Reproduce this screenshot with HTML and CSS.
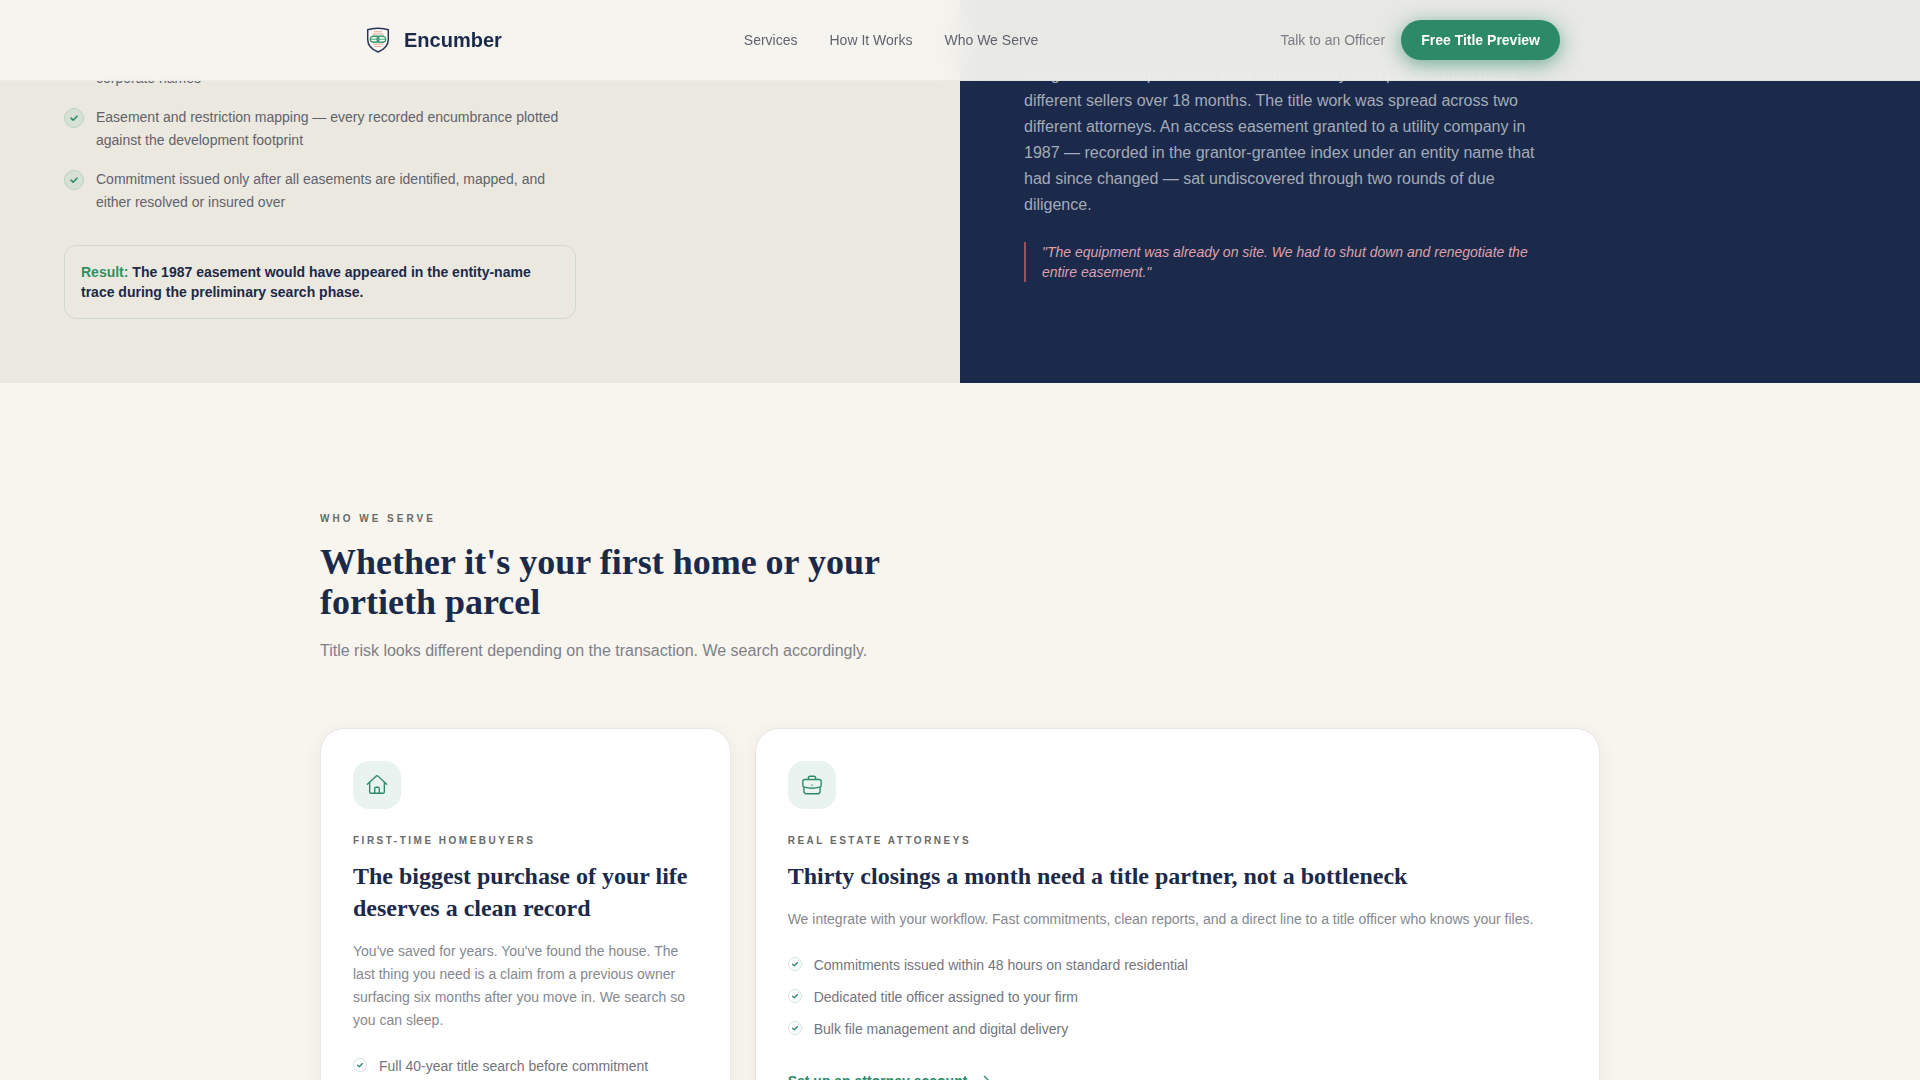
FILE: index.html
```html
<!DOCTYPE html>
<html lang="en">
<head>
<meta charset="utf-8">
<meta name="viewport" content="width=device-width, initial-scale=1">
<title>Encumber</title>
<link rel="stylesheet" href="styles.css">
</head>
<body>
<svg class="sprite" aria-hidden="true">
  <symbol id="check" viewBox="0 0 10 10"><path d="M2 5.2 4.2 7.2 8 3.2" fill="none" stroke="currentColor" stroke-width="1.6" stroke-linecap="round" stroke-linejoin="round"/></symbol>
</svg>

<header class="topbar">
  <div class="topbar-inner">
    <a class="brand" href="#">
      <svg class="brand-mark" viewBox="0 0 36 36" aria-hidden="true">
        <path d="M18 6.200c4.200 0 7.600.5 10.300 1.600v9.700c0 6-4.200 10-10.300 12.500-6.100-2.500-10.300-6.500-10.300-12.500v-9.700c2.700-1.100 6.100-1.600 10.300-1.600z" fill="#fbfaf7" stroke="#2a3655" stroke-width="1.500"/>
        <path d="M14 9.800h8M12.500 12h11M13 22.200h10M14.500 24.500h7" stroke="#e0a98c" stroke-width="1"/>
        <path d="M12 20.300h12M12 14h12M10.500 17.200h15" stroke="#7fc29f" stroke-width="1.400"/>
        <rect x="10.300" y="14.300" width="8.700" height="5.800" rx="2.900" fill="none" stroke="#3f9a75" stroke-width="1.300"/>
        <rect x="17" y="14.300" width="8.700" height="5.800" rx="2.900" fill="none" stroke="#3f9a75" stroke-width="1.300"/>
      </svg>
      <span>Encumber</span>
    </a>
    <nav class="nav">
      <a href="#services">Services</a>
      <a href="#how">How It Works</a>
      <a href="#serve">Who We Serve</a>
    </nav>
    <div class="actions">
      <a class="talk" href="#contact">Talk to an Officer</a>
      <button class="cta" type="button">Free Title Preview</button>
    </div>
  </div>
</header>

<main>
  <section class="split">
    <div class="panel panel-light">
      <ul class="steps">
        <li class="step step-tail"><span>corporate names</span></li>
        <li class="step"><span class="dot"><svg><use href="#check"/></svg></span><span>Easement and restriction mapping — every recorded encumbrance plotted against the development footprint</span></li>
        <li class="step"><span class="dot"><svg><use href="#check"/></svg></span><span>Commitment issued only after all easements are identified, mapped, and either resolved or insured over</span></li>
      </ul>
      <p class="result"><span class="result-label">Result:</span> The 1987 easement would have appeared in the entity-name trace during the preliminary search phase.</p>
    </div>
    <div class="panel panel-dark">
      <p class="story">A logistics developer assembled some county land parcels from three different sellers over 18 months. The title work was spread across two different attorneys. An access easement granted to a utility company in 1987 — recorded in the grantor-grantee index under an entity name that had since changed — sat undiscovered through two rounds of due diligence.</p>
      <blockquote class="quote">"The equipment was already on site. We had to shut down and renegotiate the entire easement."</blockquote>
    </div>
  </section>

  <section class="serve" id="serve">
    <div class="intro">
      <p class="eyebrow eyebrow-wide">WHO WE SERVE</p>
      <h2>Whether it's your first home or your fortieth parcel</h2>
      <p class="lede">Title risk looks different depending on the transaction. We search accordingly.</p>
    </div>
    <div class="cards">
      <article class="card">
        <div class="tile">
          <svg viewBox="0 0 24 24" aria-hidden="true"><path d="M1.500 11.200 10.600 2.600a2 2 0 0 1 2.800 0l9.100 8.600M4 9v10.500a1.500 1.500 0 0 0 1.500 1.500h13a1.500 1.500 0 0 0 1.500-1.500v-10.500M9.500 21v-5a1.500 1.500 0 0 1 1.500-1.500h2a1.500 1.500 0 0 1 1.500 1.500v5"/></svg>
        </div>
        <p class="eyebrow">FIRST-TIME HOMEBUYERS</p>
        <h3>The biggest purchase of your life deserves a clean record</h3>
        <p class="copy">You've saved for years. You've found the house. The last thing you need is a claim from a previous owner surfacing six months after you move in. We search so you can sleep.</p>
        <ul class="points">
          <li><span class="tick"><svg><use href="#check"/></svg></span>Full 40-year title search before commitment</li>
        </ul>
      </article>
      <article class="card card-wide">
        <div class="tile">
          <svg viewBox="0 0 24 24" aria-hidden="true"><path d="M8 6V4.500A2 2 0 0 1 10 2.500h4a2 2 0 0 1 2 2V6M4 6h16a2 2 0 0 1 2 2v4.500a2 2 0 0 1-1.500 1.900c-5.500 1.400-11.500 1.400-17 0A2 2 0 0 1 2 12.500V8a2 2 0 0 1 2-2zM3.200 14.500v4.500a2.500 2.500 0 0 0 2.500 2.500h12.600a2.500 2.500 0 0 0 2.500-2.500v-4.500M12 12h.010"/></svg>
        </div>
        <p class="eyebrow">REAL ESTATE ATTORNEYS</p>
        <h3>Thirty closings a month need a title partner, not a bottleneck</h3>
        <p class="copy">We integrate with your workflow. Fast commitments, clean reports, and a direct line to a title officer who knows your files.</p>
        <ul class="points">
          <li><span class="tick"><svg><use href="#check"/></svg></span>Commitments issued within 48 hours on standard residential</li>
          <li><span class="tick"><svg><use href="#check"/></svg></span>Dedicated title officer assigned to your firm</li>
          <li><span class="tick"><svg><use href="#check"/></svg></span>Bulk file management and digital delivery</li>
        </ul>
        <a class="more" href="#attorneys">Set up an attorney account
          <svg viewBox="0 0 24 24" aria-hidden="true"><path d="M4 12h17M14 5l7 7-7 7"/></svg></a>
      </article>
    </div>
  </section>
</main>
</body>
</html>
```
FILE: styles.css
```css
:root {
  --navy: #1b2a4a;
  --green: #2d8a66;
  --cream: #f8f5ee;
  --sans: "Liberation Sans", Arial, sans-serif;
  --serif: "Liberation Serif", "Times New Roman", serif;
}

* { box-sizing: border-box; }

html { scrollbar-width: none; }

body {
  margin: 0;
  background: var(--cream);
  color: var(--navy);
  font: 14px/20px var(--sans);
}

h2, h3, p, ul, blockquote { margin: 0; padding: 0; }
ul { list-style: none; }
a { color: inherit; text-decoration: none; }

.sprite { position: absolute; width: 0; height: 0; }

/* Top bar */
.topbar {
  position: fixed;
  inset: 0 0 auto;
  z-index: 10;
  background: rgba(245, 244, 239, 0.94);
  backdrop-filter: blur(16px);
  border-bottom: 1px solid rgba(27, 42, 74, 0.04);
}

.topbar-inner {
  display: flex;
  align-items: center;
  justify-content: space-between;
  max-width: 1200px;
  height: 80px;
  margin: 0 auto;
}

.brand {
  display: flex;
  align-items: center;
  gap: 8px;
  font-size: 20px;
  font-weight: 700;
}

.brand-mark { width: 36px; height: 36px; }

.nav { display: flex; gap: 32px; color: #60646f; }

.actions { display: flex; align-items: center; gap: 16px; }
.talk { color: #7b7e85; }

.cta {
  height: 40px;
  padding: 0 20px;
  border: 0;
  border-radius: 20px;
  background: var(--green);
  color: #fff;
  font: 700 14px/20px var(--sans);
  box-shadow: 0 4px 20px rgba(45, 138, 102, 0.65);
}

/* Comparison panels */
.split { display: grid; grid-template-columns: 1fr 1fr; }

.panel { padding: 0 64px 64px; }
.panel-light { padding-top: 67px; background: #ebe8e0; }
.panel-dark { padding-top: 62px; background: var(--navy); }

.steps {
  display: grid;
  gap: 16px;
  max-width: 512px;
  color: #60636c;
  line-height: 23px;
}

.step { display: flex; gap: 12px; }
.step-tail { padding-left: 32px; }

.dot, .tick {
  display: grid;
  place-items: center;
  flex: none;
  margin-top: 2px;
  border-radius: 50%;
  color: var(--green);
}

.dot {
  width: 20px;
  height: 20px;
  border: 1px solid #bcd3c5;
  background: #d7e0d5;
}

.dot svg { width: 10px; height: 10px; }

.result {
  max-width: 512px;
  margin-top: 31px;
  padding: 16px;
  border: 1px solid #cfd8cd;
  border-radius: 12px;
  font-weight: 700;
}

.result-label { color: #2f9162; }

.story {
  max-width: 512px;
  color: #a4aab7;
  font-size: 16px;
  line-height: 26px;
}

.quote {
  max-width: 512px;
  margin-top: 24px;
  padding-left: 16px;
  border-left: 2px solid #a04f5f;
  color: #dfa0ae;
  font-style: italic;
}

/* Audience section */
.serve {
  max-width: 1280px;
  margin: 0 auto;
  padding: 128px 0;
}

.intro { max-width: 576px; }

.eyebrow {
  color: #6b6a67;
  font-size: 10px;
  font-weight: 700;
  line-height: 15px;
  letter-spacing: 0.25em;
}

.eyebrow-wide { letter-spacing: 0.3em; }

h2 {
  margin-top: 16px;
  font: 700 36px/40px var(--serif);
}

.lede {
  margin-top: 16px;
  color: #7d8089;
  font-size: 16px;
  line-height: 26px;
}

.cards {
  display: grid;
  grid-template-columns: repeat(3, 1fr);
  gap: 24px;
  margin-top: 64px;
}

.card {
  padding: 32px;
  border: 1px solid #e9e7e3;
  border-radius: 24px;
  background: #fff;
  box-shadow: 0 4px 20px rgba(27, 42, 74, 0.06);
}

.card-wide { grid-column: span 2; }

.tile {
  display: grid;
  place-items: center;
  width: 48px;
  height: 48px;
  margin-bottom: 24px;
  border-radius: 16px;
  background: #e9f3ef;
}

.tile svg, .more svg {
  fill: none;
  stroke: var(--green);
  stroke-linecap: round;
  stroke-linejoin: round;
}

.tile svg { width: 22px; height: 22px; stroke-width: 1.5; }

h3 {
  margin-top: 12px;
  font: 700 24px/32px var(--serif);
}

.copy {
  margin-top: 16px;
  color: #85888f;
  line-height: 23px;
}

.points {
  display: grid;
  gap: 12px;
  margin-top: 24px;
  color: #72757e;
}

.points li { display: flex; gap: 12px; }

.tick {
  width: 14px;
  height: 14px;
  border: 1px solid #d3e3dc;
}

.tick svg { width: 8px; height: 8px; }

.more {
  display: inline-flex;
  align-items: center;
  gap: 8px;
  margin-top: 32px;
  color: var(--green);
  font-weight: 700;
}

.more svg { width: 16px; height: 16px; stroke-width: 2; }
```
